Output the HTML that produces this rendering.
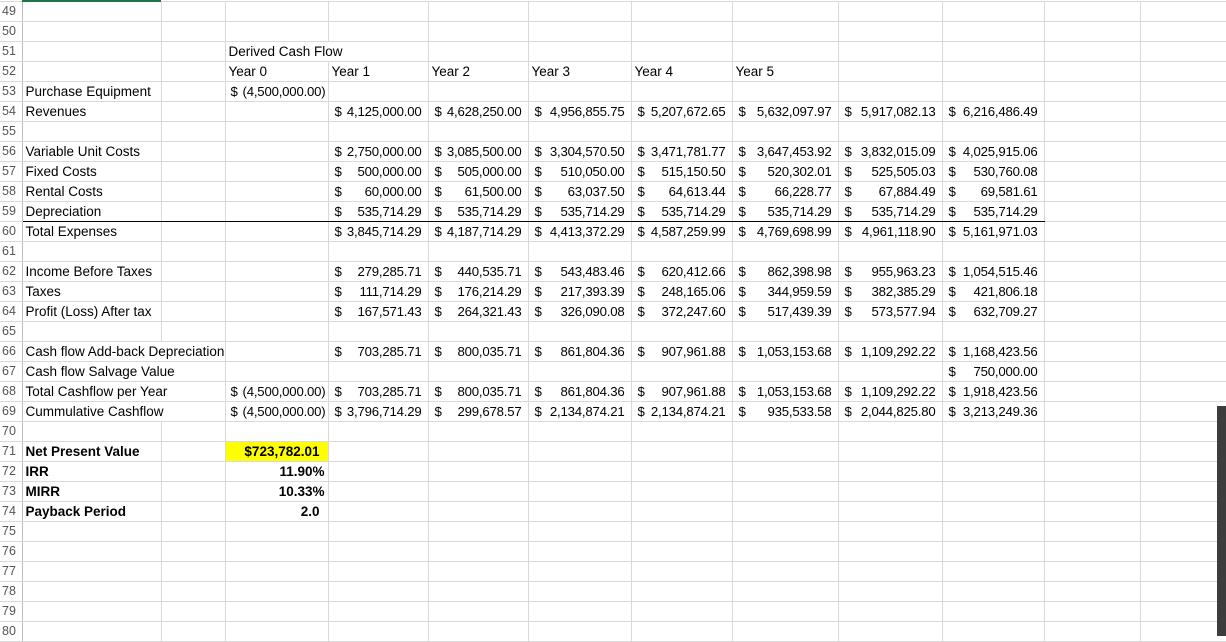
<!DOCTYPE html>
<html><head><meta charset="utf-8"><style>
body{margin:0;background:#fff;width:1226px;height:636px;overflow:hidden;position:relative;font-family:"Liberation Sans",Arial,sans-serif;}
table{position:absolute;left:0;top:1px;border-collapse:collapse;table-layout:fixed;width:1240px;}
td{height:19px;padding:0 3px;border:1px solid #d9d9d9;font-size:13.5px;color:#000;white-space:nowrap;overflow:visible;line-height:19px;vertical-align:middle;}
td.h{color:#555;font-size:12.5px;padding:0 0 0 2px;border-right:1px solid #bdbdbd;border-left:none}
td.n{font-size:13.2px;letter-spacing:-0.2px;text-align:right;padding-right:6px;padding-left:6px}
td.n s{text-decoration:none;float:left}
td.g{padding-right:2px;padding-left:5px}
td.o{border-right-color:transparent}
.b{font-weight:bold}
tr.ul td:not(.h){border-bottom:1px solid #000}
tr.ul td.last,tr.ul td.last ~ td{border-bottom:1px solid #d9d9d9}
.y{background:#ffff00}
#green{position:absolute;left:22px;top:0;width:139px;height:2px;background:#217346}
#sb{position:absolute;left:1217px;top:406px;width:9px;height:230px;background:#3c3c3c}
</style></head><body>
<table>
<colgroup><col style="width:22px"><col style="width:139px"><col style="width:64px"><col style="width:103px"><col style="width:100px"><col style="width:100px"><col style="width:103px"><col style="width:101px"><col style="width:106px"><col style="width:104px"><col style="width:102px"><col style="width:96px"><col style="width:100px"></colgroup>
<tr><td class="h">49</td><td></td><td></td><td></td><td></td><td></td><td></td><td></td><td></td><td></td><td></td><td></td><td></td></tr>
<tr><td class="h">50</td><td></td><td></td><td></td><td></td><td></td><td></td><td></td><td></td><td></td><td></td><td></td><td></td></tr>
<tr><td class="h">51</td><td></td><td></td><td class="o">Derived Cash Flow</td><td></td><td></td><td></td><td></td><td></td><td></td><td></td><td></td><td></td></tr>
<tr><td class="h">52</td><td></td><td></td><td>Year 0</td><td>Year 1</td><td>Year 2</td><td>Year 3</td><td>Year 4</td><td>Year 5</td><td></td><td></td><td></td><td></td></tr>
<tr><td class="h">53</td><td>Purchase Equipment</td><td></td><td class="n g"><s>$</s>(4,500,000.00)</td><td></td><td></td><td></td><td></td><td></td><td></td><td></td><td></td><td></td></tr>
<tr><td class="h">54</td><td>Revenues</td><td></td><td></td><td class="n"><s>$</s>4,125,000.00</td><td class="n"><s>$</s>4,628,250.00</td><td class="n"><s>$</s>4,956,855.75</td><td class="n"><s>$</s>5,207,672.65</td><td class="n"><s>$</s>5,632,097.97</td><td class="n"><s>$</s>5,917,082.13</td><td class="n"><s>$</s>6,216,486.49</td><td></td><td></td></tr>
<tr><td class="h">55</td><td></td><td></td><td></td><td></td><td></td><td></td><td></td><td></td><td></td><td></td><td></td><td></td></tr>
<tr><td class="h">56</td><td>Variable Unit Costs</td><td></td><td></td><td class="n"><s>$</s>2,750,000.00</td><td class="n"><s>$</s>3,085,500.00</td><td class="n"><s>$</s>3,304,570.50</td><td class="n"><s>$</s>3,471,781.77</td><td class="n"><s>$</s>3,647,453.92</td><td class="n"><s>$</s>3,832,015.09</td><td class="n"><s>$</s>4,025,915.06</td><td></td><td></td></tr>
<tr><td class="h">57</td><td>Fixed Costs</td><td></td><td></td><td class="n"><s>$</s>500,000.00</td><td class="n"><s>$</s>505,000.00</td><td class="n"><s>$</s>510,050.00</td><td class="n"><s>$</s>515,150.50</td><td class="n"><s>$</s>520,302.01</td><td class="n"><s>$</s>525,505.03</td><td class="n"><s>$</s>530,760.08</td><td></td><td></td></tr>
<tr><td class="h">58</td><td>Rental Costs</td><td></td><td></td><td class="n"><s>$</s>60,000.00</td><td class="n"><s>$</s>61,500.00</td><td class="n"><s>$</s>63,037.50</td><td class="n"><s>$</s>64,613.44</td><td class="n"><s>$</s>66,228.77</td><td class="n"><s>$</s>67,884.49</td><td class="n"><s>$</s>69,581.61</td><td></td><td></td></tr>
<tr class="ul"><td class="h">59</td><td>Depreciation</td><td></td><td></td><td class="n"><s>$</s>535,714.29</td><td class="n"><s>$</s>535,714.29</td><td class="n"><s>$</s>535,714.29</td><td class="n"><s>$</s>535,714.29</td><td class="n"><s>$</s>535,714.29</td><td class="n"><s>$</s>535,714.29</td><td class="n"><s>$</s>535,714.29</td><td class="last"></td><td></td></tr>
<tr><td class="h">60</td><td>Total Expenses</td><td></td><td></td><td class="n"><s>$</s>3,845,714.29</td><td class="n"><s>$</s>4,187,714.29</td><td class="n"><s>$</s>4,413,372.29</td><td class="n"><s>$</s>4,587,259.99</td><td class="n"><s>$</s>4,769,698.99</td><td class="n"><s>$</s>4,961,118.90</td><td class="n"><s>$</s>5,161,971.03</td><td></td><td></td></tr>
<tr><td class="h">61</td><td></td><td></td><td></td><td></td><td></td><td></td><td></td><td></td><td></td><td></td><td></td><td></td></tr>
<tr><td class="h">62</td><td>Income Before Taxes</td><td></td><td></td><td class="n"><s>$</s>279,285.71</td><td class="n"><s>$</s>440,535.71</td><td class="n"><s>$</s>543,483.46</td><td class="n"><s>$</s>620,412.66</td><td class="n"><s>$</s>862,398.98</td><td class="n"><s>$</s>955,963.23</td><td class="n"><s>$</s>1,054,515.46</td><td></td><td></td></tr>
<tr><td class="h">63</td><td>Taxes</td><td></td><td></td><td class="n"><s>$</s>111,714.29</td><td class="n"><s>$</s>176,214.29</td><td class="n"><s>$</s>217,393.39</td><td class="n"><s>$</s>248,165.06</td><td class="n"><s>$</s>344,959.59</td><td class="n"><s>$</s>382,385.29</td><td class="n"><s>$</s>421,806.18</td><td></td><td></td></tr>
<tr><td class="h">64</td><td>Profit (Loss) After tax</td><td></td><td></td><td class="n"><s>$</s>167,571.43</td><td class="n"><s>$</s>264,321.43</td><td class="n"><s>$</s>326,090.08</td><td class="n"><s>$</s>372,247.60</td><td class="n"><s>$</s>517,439.39</td><td class="n"><s>$</s>573,577.94</td><td class="n"><s>$</s>632,709.27</td><td></td><td></td></tr>
<tr><td class="h">65</td><td></td><td></td><td></td><td></td><td></td><td></td><td></td><td></td><td></td><td></td><td></td><td></td></tr>
<tr><td class="h">66</td><td class="o">Cash flow Add-back Depreciation</td><td></td><td></td><td class="n"><s>$</s>703,285.71</td><td class="n"><s>$</s>800,035.71</td><td class="n"><s>$</s>861,804.36</td><td class="n"><s>$</s>907,961.88</td><td class="n"><s>$</s>1,053,153.68</td><td class="n"><s>$</s>1,109,292.22</td><td class="n"><s>$</s>1,168,423.56</td><td></td><td></td></tr>
<tr><td class="h">67</td><td class="o">Cash flow Salvage Value</td><td></td><td></td><td></td><td></td><td></td><td></td><td></td><td></td><td class="n"><s>$</s>750,000.00</td><td></td><td></td></tr>
<tr><td class="h">68</td><td class="o">Total Cashflow per Year</td><td></td><td class="n g"><s>$</s>(4,500,000.00)</td><td class="n"><s>$</s>703,285.71</td><td class="n"><s>$</s>800,035.71</td><td class="n"><s>$</s>861,804.36</td><td class="n"><s>$</s>907,961.88</td><td class="n"><s>$</s>1,053,153.68</td><td class="n"><s>$</s>1,109,292.22</td><td class="n"><s>$</s>1,918,423.56</td><td></td><td></td></tr>
<tr><td class="h">69</td><td class="o">Cummulative Cashflow</td><td></td><td class="n g"><s>$</s>(4,500,000.00)</td><td class="n"><s>$</s>3,796,714.29</td><td class="n"><s>$</s>299,678.57</td><td class="n"><s>$</s>2,134,874.21</td><td class="n"><s>$</s>2,134,874.21</td><td class="n"><s>$</s>935,533.58</td><td class="n"><s>$</s>2,044,825.80</td><td class="n"><s>$</s>3,213,249.36</td><td></td><td></td></tr>
<tr><td class="h">70</td><td></td><td></td><td></td><td></td><td></td><td></td><td></td><td></td><td></td><td></td><td></td><td></td></tr>
<tr><td class="h">71</td><td class="b">Net Present Value</td><td></td><td class="b y" style="text-align:right;padding-right:8px">$723,782.01</td><td></td><td></td><td></td><td></td><td></td><td></td><td></td><td></td><td></td></tr>
<tr><td class="h">72</td><td class="b">IRR</td><td></td><td class="b" style="text-align:right;padding-right:3px">11.90%</td><td></td><td></td><td></td><td></td><td></td><td></td><td></td><td></td><td></td></tr>
<tr><td class="h">73</td><td class="b">MIRR</td><td></td><td class="b" style="text-align:right;padding-right:3px">10.33%</td><td></td><td></td><td></td><td></td><td></td><td></td><td></td><td></td><td></td></tr>
<tr><td class="h">74</td><td class="b">Payback Period</td><td></td><td class="b" style="text-align:right;padding-right:8px">2.0</td><td></td><td></td><td></td><td></td><td></td><td></td><td></td><td></td><td></td></tr>
<tr><td class="h">75</td><td></td><td></td><td></td><td></td><td></td><td></td><td></td><td></td><td></td><td></td><td></td><td></td></tr>
<tr><td class="h">76</td><td></td><td></td><td></td><td></td><td></td><td></td><td></td><td></td><td></td><td></td><td></td><td></td></tr>
<tr><td class="h">77</td><td></td><td></td><td></td><td></td><td></td><td></td><td></td><td></td><td></td><td></td><td></td><td></td></tr>
<tr><td class="h">78</td><td></td><td></td><td></td><td></td><td></td><td></td><td></td><td></td><td></td><td></td><td></td><td></td></tr>
<tr><td class="h">79</td><td></td><td></td><td></td><td></td><td></td><td></td><td></td><td></td><td></td><td></td><td></td><td></td></tr>
<tr><td class="h">80</td><td></td><td></td><td></td><td></td><td></td><td></td><td></td><td></td><td></td><td></td><td></td><td></td></tr>
</table>
<div id="green"></div>
<div id="sb"></div>
</body></html>
